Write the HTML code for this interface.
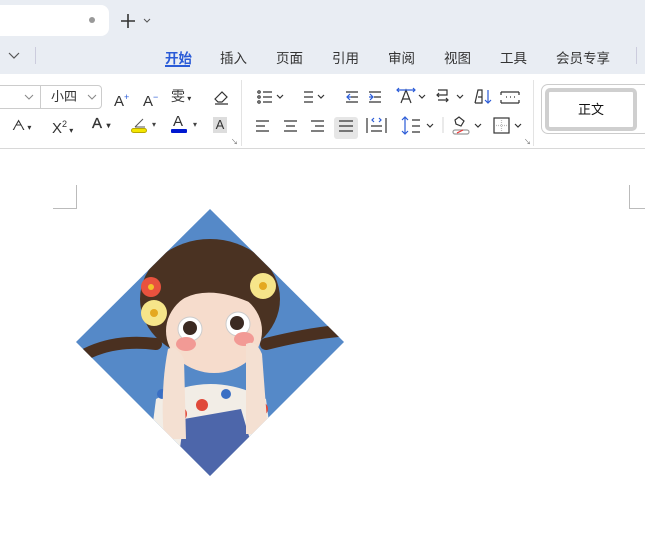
<!DOCTYPE html>
<html><head><meta charset="utf-8"><style>
*{margin:0;padding:0;box-sizing:border-box}
body{width:645px;height:551px;overflow:hidden;background:#fff;font-family:"Liberation Sans","Noto Sans CJK SC",sans-serif;position:relative;color:#333}
.a{position:absolute}
.hdr{left:0;top:0;width:645px;height:74px;background:#e9edf3}
.tab{left:-10px;top:5px;width:119px;height:31px;background:#fff;border-radius:8px}
.t{position:absolute;top:47px;font-size:13.5px;color:#333}
.tb{left:0;top:74px;width:645px;height:75px;background:#fff;border-bottom:1px solid #d8d8d8}
.ic{position:absolute;font-size:14px;color:#333;line-height:16px}
.chev{position:absolute;font-size:8px;color:#444}
</style></head><body>
<div class="a hdr"></div>
<div class="a tab"></div>
<div class="a" style="left:89px;top:17px;width:6px;height:6px;border-radius:3px;background:#999"></div>
<svg class="a" style="left:119px;top:12px" width="40" height="18"><path d="M2 9h14M9 2v14" stroke="#333" stroke-width="1.6"/><path d="M25 7l3 3 3-3" stroke="#555" fill="none"/></svg>
<svg class="a" style="left:8px;top:51px" width="12" height="10"><path d="M1 2l5 5 5-5" stroke="#555" fill="none" stroke-width="1.2"/></svg>
<div class="a" style="left:35px;top:47px;width:1px;height:17px;background:#ccd"></div>
<div class="t" style="left:165px;color:#2a5bd7;font-weight:bold">开始</div>
<div class="a" style="left:165px;top:65px;width:25px;height:2px;background:#2a5bd7"></div>
<div class="t" style="left:220px">插入</div>
<div class="t" style="left:276px">页面</div>
<div class="t" style="left:332px">引用</div>
<div class="t" style="left:388px">审阅</div>
<div class="t" style="left:444px">视图</div>
<div class="t" style="left:500px">工具</div>
<div class="t" style="left:556px">会员专享</div>
<div class="a" style="left:636px;top:47px;width:1px;height:17px;background:#ccd"></div>
<div class="a tb"></div>
<div class="a" style="left:-5px;top:85px;width:107px;height:24px;border:1px solid #ccc;border-radius:4px"></div>
<div class="a" style="left:40px;top:85px;width:1px;height:24px;background:#ccc"></div>
<svg class="a" style="left:24px;top:94px" width="80" height="8"><path d="M1 1l4 4 4-4M64 1l4 4 4-4" stroke="#888" fill="none"/></svg>
<div class="ic" style="left:51px;top:89px;font-size:13px">小四</div>
<div class="ic" style="left:114px;top:89px;font-size:15px">A<sup style="font-size:9px;color:#2a5bd7">+</sup></div>
<div class="ic" style="left:143px;top:89px;font-size:15px">A<sup style="font-size:9px;color:#2a5bd7">−</sup></div>
<div class="ic" style="left:171px;top:88px;font-size:14px">雯<span style="font-size:8px"> ▾</span></div>
<svg class="a" style="left:212px;top:88px" width="18" height="18"><path d="M3 11l7-7 5 5-5 5H6z M3 16h13" stroke="#333" fill="none" stroke-width="1.2"/></svg>
<div class="ic" style="left:12px;top:117px">ᗅ<span style="font-size:8px"> ▾</span></div>
<div class="ic" style="left:52px;top:116px;font-size:15px">X<sup style="font-size:9px">2</sup><span style="font-size:8px"> ▾</span></div>
<div class="ic" style="left:92px;top:116px;font-size:15px;-webkit-text-stroke:0.3px">A<span style="font-size:8px">&nbsp; ▾</span></div>
<svg class="a" style="left:131px;top:115px" width="18" height="19"><path d="M4 12l8-8M4 12h10" stroke="#555" fill="none"/><rect x="0.5" y="13.5" width="15" height="4" rx="2" fill="#f4e600" stroke="#b9a800"/></svg>
<div class="chev" style="left:152px;top:120px">▾</div>
<div class="ic" style="left:173px;top:114px;font-size:15px">A</div>
<div class="a" style="left:171px;top:129px;width:16px;height:4px;background:#0018d0;border-radius:1px"></div>
<div class="chev" style="left:193px;top:120px">▾</div>
<div class="a" style="left:213px;top:117px;width:14px;height:16px;background:#ddd;font-size:13px;text-align:center;line-height:16px">A</div>
<div class="a" style="left:231px;top:137px;font-size:7px;color:#666">↘</div>
<div class="a" style="left:241px;top:80px;width:1px;height:66px;background:#e3e3e3"></div>
<div class="a" style="left:533px;top:80px;width:1px;height:66px;background:#e3e3e3"></div>
<div class="a" style="left:524px;top:137px;font-size:7px;color:#666">↘</div>
<svg class="a" style="left:250px;top:84px" width="280" height="56">
<g stroke="#333" stroke-width="1.2" fill="none">
<circle cx="9" cy="8" r="1.2"/><circle cx="9" cy="13" r="1.2"/><circle cx="9" cy="18" r="1.2"/><path d="M13 8h9M13 13h9M13 18h9"/>
<path d="M27 11l3 3 3-3"/>
<path d="M54 8h9M54 13h9M54 18h9"/><path d="M68 11l3 3 3-3"/>
<path d="M96 8h12M101 13h7M96 18h12"/><path d="M100 10l-3 3 3 3M97 13h4" stroke="#2a5bd7"/>
<path d="M119 8h12M124 13h7M119 18h12"/><path d="M120 10l3 3-3 3M119 13h4" stroke="#2a5bd7"/>
<path d="M151 19l5-13 5 13M153 15h6"/><path d="M147 6h18M149 4l-2 2 2 2M163 4l2 2-2 2" stroke="#2a5bd7"/>
<path d="M169 11l3 3 3-3"/>
<path d="M188 6h9v5h-10M189 9l-2 2 2 2M188 16h10M196 14l2 2-2 2"/><path d="M207 11l3 3 3-3"/>
<path d="M225 19l3-13h4v13h-7M228 13h4"/><path d="M238 6v13M235 16l3 3 3-3" stroke="#2a5bd7"/>
<path d="M251 8h18M251 19h18M251 8v3M269 8v3M251 16v3M269 16v3M256 13h1M260 13h1M264 13h1"/>
<path d="M6 37h13M6 42h9M6 47h13"/><path d="M34 37h13M36 42h9M34 47h13"/><path d="M61 37h13M65 42h9M61 47h13"/>
</g>
<rect x="84" y="33" width="24" height="22" rx="3" fill="#e6e6e6"/>
<g stroke="#333" stroke-width="1.2" fill="none">
<path d="M89 37h14M89 42h14M89 47h14"/>
<path d="M117 34v15M136 34v15M121 42h11M121 47h11"/><path d="M124 38l-2 -2 2-2M129 38l2-2-2-2" stroke="#2a5bd7"/>
<path d="M155 34v15M152 36l3-3 3 3M152 47l3 3 3-3" stroke="#2a5bd7"/><path d="M162 36h8M162 42h8M162 48h8"/><path d="M177 40l3 3 3-3"/>
<path d="M193 33v16" stroke="#ddd"/>
<path d="M205 36l4-3 5 4-3 5-5-2z"/><rect x="203" y="46" width="16" height="4" rx="2" stroke="#999"/><path d="M207 49l6-3" stroke="#e33"/><path d="M225 40l3 3 3-3"/>
<rect x="244" y="34" width="15" height="15"/><path d="M251.5 36v11M246 41.5h11" stroke="#bbb" stroke-dasharray="1 1"/><path d="M265 40l3 3 3-3"/>
</g></svg>
<div class="a" style="left:541px;top:84px;width:110px;height:50px;border:1px solid #ccc;border-radius:7px"></div>
<div class="a" style="left:545px;top:88px;width:92px;height:43px;border:4px solid #cfcfcf;border-radius:5px;text-align:center;line-height:35px;font-size:13px;color:#111">正文</div>
<div class="a" style="left:53px;top:185px;width:24px;height:24px;border-right:1px solid #bbb;border-bottom:1px solid #bbb"></div>
<div class="a" style="left:629px;top:185px;width:20px;height:24px;border-left:1px solid #bbb;border-bottom:1px solid #bbb"></div>
<svg class="a" style="left:76px;top:209px" width="268" height="268" viewBox="0 0 268 268">
<defs><clipPath id="d"><polygon points="134,0 268,133 134,267 0,133"/></clipPath></defs>
<g clip-path="url(#d)">
<rect width="268" height="268" fill="#5589c8"/>
<path d="M10 145 Q40 130 80 135" stroke="#4a3020" stroke-width="12" fill="none" stroke-linecap="round"/>
<path d="M190 135 Q230 125 262 122" stroke="#4a3020" stroke-width="12" fill="none" stroke-linecap="round"/>
<path d="M70 268 L80 190 Q134 160 190 190 L200 268z" fill="#f2ede6"/>
<circle cx="104" cy="205" r="7" fill="#e0493a"/><circle cx="178" cy="175" r="8" fill="#e0493a"/><circle cx="185" cy="200" r="7" fill="#e0493a"/><circle cx="126" cy="196" r="6" fill="#e0493a"/><circle cx="150" cy="185" r="5" fill="#3a6fc4"/><circle cx="86" cy="185" r="5" fill="#3a6fc4"/>
<path d="M108 210 L165 200 L185 268 L100 268z" fill="#4d66aa"/>
<ellipse cx="134" cy="90" rx="70" ry="60" fill="#4a3222"/>
<ellipse cx="138" cy="122" rx="48" ry="42" fill="#f6dccc"/>
<path d="M90 105 Q120 65 188 100 L190 80 Q134 30 85 85z" fill="#4a3222"/>
<circle cx="114" cy="120" r="12" fill="#fff" stroke="#ccc"/><circle cx="162" cy="115" r="12" fill="#fff" stroke="#ccc"/>
<circle cx="114" cy="119" r="7" fill="#3b2a22"/><circle cx="161" cy="114" r="7" fill="#3b2a22"/>
<ellipse cx="110" cy="135" rx="10" ry="7" fill="#f29a95"/><ellipse cx="168" cy="130" rx="10" ry="7" fill="#f29a95"/>
<path d="M92 140 Q100 135 108 150 L110 230 L88 230 Q84 180 92 140z" fill="#f4e0d2"/>
<path d="M170 135 Q180 130 186 145 L192 225 L170 225z" fill="#f4e0d2"/>
<circle cx="75" cy="78" r="10" fill="#e8523e"/><circle cx="75" cy="78" r="3" fill="#f2c22a"/>
<circle cx="78" cy="104" r="13" fill="#f6e58a"/><circle cx="78" cy="104" r="4" fill="#e4a820"/>
<circle cx="187" cy="77" r="13" fill="#f6e58a"/><circle cx="187" cy="77" r="4" fill="#e4a820"/>
</g></svg>
</body></html>
